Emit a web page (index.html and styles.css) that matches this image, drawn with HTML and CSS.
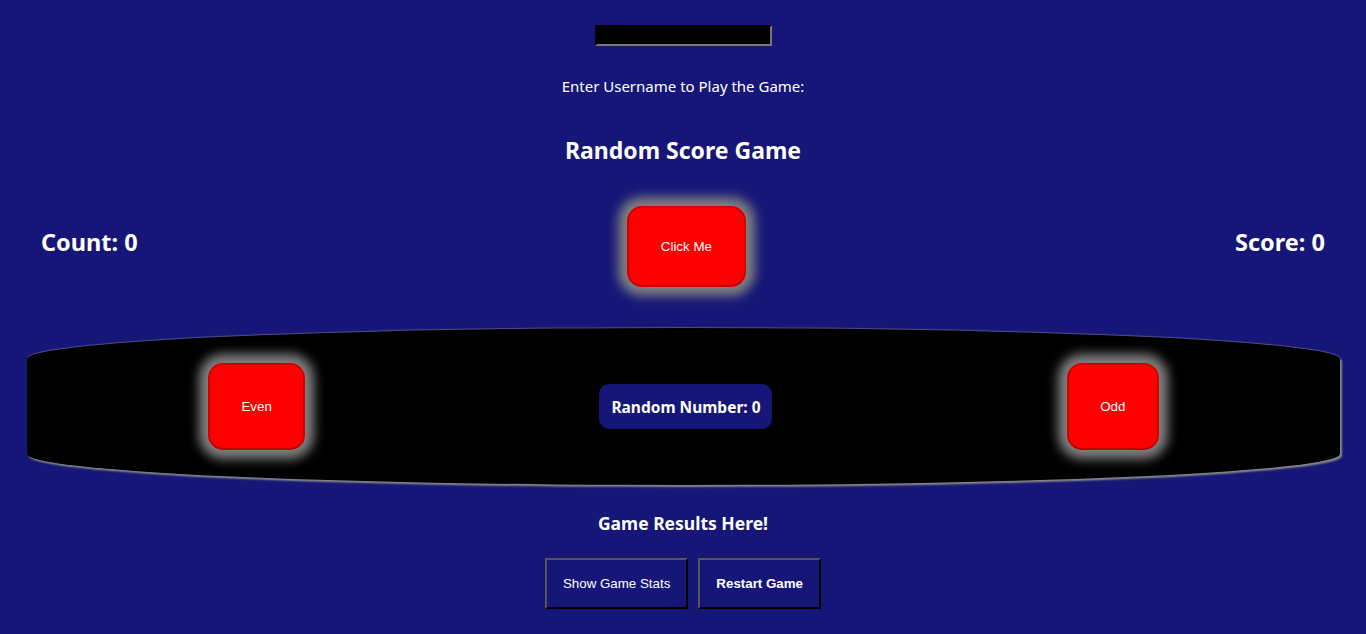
FILE: index.html
```html
<!DOCTYPE html>
<html>
<head>
<meta charset="utf-8">
<link rel="stylesheet" href="styles.css">
</head>
<body>
<div class="page">
  <input class="username" type="text">
  <p class="prompt">Enter Username to Play the Game:</p>
  <h2 class="title">Random Score Game</h2>
  <div class="top-row">
    <h2 class="stat">Count: 0</h2>
    <button class="red-btn click-btn">Click Me</button>
    <h2 class="stat">Score: 0</h2>
  </div>
  <div class="board">
    <button class="red-btn even-btn">Even</button>
    <div class="random">Random Number: 0</div>
    <button class="red-btn odd-btn">Odd</button>
  </div>
  <h3 class="results">Game Results Here!</h3>
  <div class="actions">
    <button class="nav-btn">Show Game Stats</button>
    <button class="nav-btn bold">Restart Game</button>
  </div>
</div>
</body>
</html>
```
FILE: styles.css
```css
html, body {
  margin: 0;
  padding: 0;
  background: #151677;
}
body {
  font-family: "Noto Sans", "Open Sans", sans-serif;
  color: #fff;
}
.page {
  display: flex;
  flex-direction: column;
  align-items: center;
  padding-top: 25px;
}
.username {
  width: 173px;
  height: 17px;
  box-sizing: content-box;
  padding: 0;
  margin: 0;
  background: #000;
  border: 2px inset #767676;
  border-color: #333 #777 #777 #333;
  color: #fff;
}
.prompt {
  margin: 30px 0 0;
  font-size: 15px;
  line-height: 20px;
}
.title {
  margin: 39px 0 0;
  font-size: 23px;
  line-height: 30px;
  font-weight: 700;
}
.top-row {
  align-self: stretch;
  display: flex;
  justify-content: space-between;
  align-items: center;
  padding: 0 41px;
  margin-top: 39px;
}
.stat {
  margin: 0 0 7px;
  font-size: 23.5px;
  font-weight: 700;
  line-height: 30px;
}
.red-btn {
  background: #ff0000;
  color: #fff;
  font-family: "Liberation Sans", Arial, sans-serif;
  font-size: 13.33px;
  border: 2px solid #d10000;
  border-bottom-color: #b80000;
  border-radius: 15px;
  box-shadow: 0 0 11px 9px #808080;
  box-sizing: border-box;
}
.click-btn {
  width: 119px;
  height: 81px;
  margin-top: 2px;
}
.board {
  align-self: stretch;
  margin: 41px 26px 0 27px;
  height: 157px;
  background: #000;
  border-radius: 50% / 31px;
  box-shadow: 2px 2px 2px #8a8a8a, 0 -1px 1px rgba(140,140,160,0.5);
  display: flex;
  align-items: center;
  justify-content: space-around;
  padding: 0 34px;
  box-sizing: border-box;
}
.even-btn {
  width: 97px;
  height: 87px;
  margin-top: -1px;
}
.odd-btn {
  width: 92px;
  height: 87px;
  margin-top: -1px;
}
.random {
  background: #151677;
  border-radius: 10px;
  width: 173px;
  height: 45px;
  display: flex;
  align-items: center;
  justify-content: center;
  font-size: 15.5px;
  font-weight: 700;
}
.results {
  margin: 26px 0 0;
  font-size: 17.5px;
  line-height: 24px;
  font-weight: 700;
}
.actions {
  display: flex;
  gap: 10px;
  margin-top: 23px;
}
.nav-btn {
  height: 51px;
  padding: 0 16px;
  background: #151677;
  color: #fff;
  font-family: "Liberation Sans", Arial, sans-serif;
  font-size: 13.33px;
  border: 2px solid;
  border-color: #555 #000 #000 #555;
}
.nav-btn.bold {
  font-weight: 700;
}
```
